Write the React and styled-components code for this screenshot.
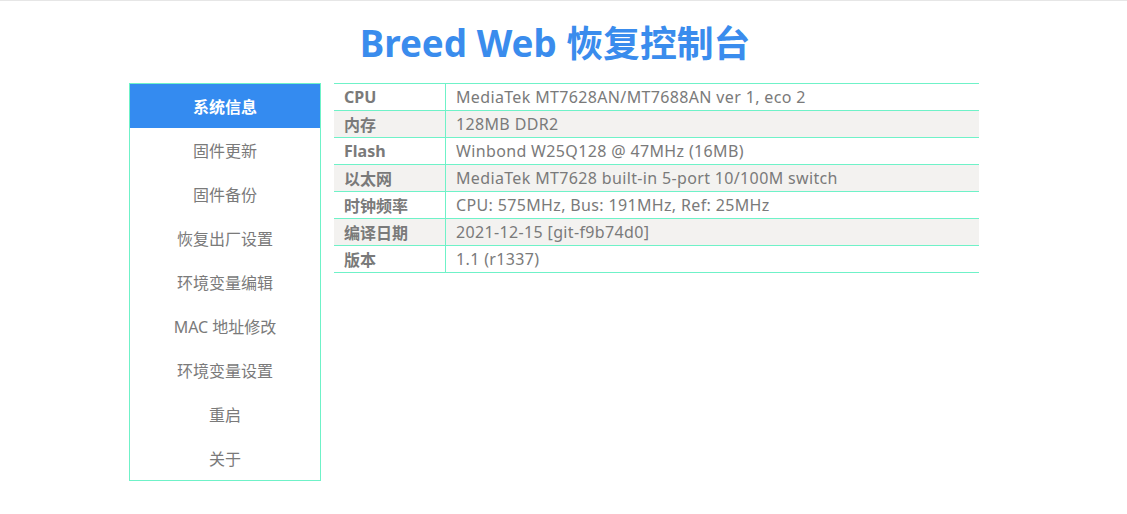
import React from "react";
import styled, { createGlobalStyle } from "styled-components";

const Global = createGlobalStyle`
  html, body { margin: 0; padding: 0; background: #fff; }
  body {
    font-family: "Noto Sans", "Noto Sans CJK SC", sans-serif;
    color: #7a7a7a;
    border-top: 1px solid #e6e6e6;
  }
`;

const Page = styled.div`
  width: 1108px;
  display: flex;
  flex-direction: column;
  align-items: center;
`;

const Title = styled.h1`
  margin: 18px 0 0 2px;
  height: 64px;
  font-family: "Noto Sans", "Noto Sans CJK SC", sans-serif;
  font-size: 36.8px;
  line-height: 48px;
  font-weight: 700;
  color: #3a8ced;
  letter-spacing: 0;
`;

const Body = styled.div`
  display: flex;
  align-items: flex-start;
  gap: 13px;
  width: 850px;
`;

const Sidebar = styled.nav`
  width: 190px;
  border: 1px solid #6ff2c8;
  display: flex;
  flex-direction: column;
`;

const NavItem = styled.div`
  height: 44px;
  display: flex;
  align-items: center;
  justify-content: center;
  font-size: 16px;
  color: ${(p) => (p.$active ? "#fff" : "#7a7a7a")};
  background: ${(p) => (p.$active ? "#348bf0" : "transparent")};
  font-weight: ${(p) => (p.$active ? 700 : 400)};
`;

const Table = styled.table`
  width: 645px;
  border-collapse: collapse;
  font-size: 16px;
`;

const Row = styled.tr`
  background: ${(p) => (p.$alt ? "#f3f2f0" : "#fff")};
`;

const Label = styled.td`
  width: 91px;
  height: 26px;
  padding: 0 10px;
  font-weight: 700;
  color: #7a7a7a;
  border-top: 1px solid #6ff2c8;
  border-bottom: 1px solid #6ff2c8;
  border-right: 1px solid #6ff2c8;
  white-space: nowrap;
`;

const Value = styled.td`
  padding: 0 10px;
  height: 26px;
  color: #7a7a7a;
  letter-spacing: 0.35px;
  border-top: 1px solid #6ff2c8;
  border-bottom: 1px solid #6ff2c8;
  white-space: nowrap;
`;

const nav = [
  "系统信息",
  "固件更新",
  "固件备份",
  "恢复出厂设置",
  "环境变量编辑",
  "MAC 地址修改",
  "环境变量设置",
  "重启",
  "关于",
];

const rows = [
  ["CPU", "MediaTek MT7628AN/MT7688AN ver 1, eco 2"],
  ["内存", "128MB DDR2"],
  ["Flash", "Winbond W25Q128 @ 47MHz (16MB)"],
  ["以太网", "MediaTek MT7628 built-in 5-port 10/100M switch"],
  ["时钟频率", "CPU: 575MHz, Bus: 191MHz, Ref: 25MHz"],
  ["编译日期", "2021-12-15 [git-f9b74d0]"],
  ["版本", "1.1 (r1337)"],
];

export default function App() {
  return (
    <>
      <Global />
      <Page>
        <Title>Breed Web 恢复控制台</Title>
        <Body>
          <Sidebar>
            {nav.map((n, i) => (
              <NavItem key={n} $active={i === 0}>
                {n}
              </NavItem>
            ))}
          </Sidebar>
          <Table>
            <tbody>
              {rows.map(([k, v], i) => (
                <Row key={k} $alt={i % 2 === 1}>
                  <Label>{k}</Label>
                  <Value>{v}</Value>
                </Row>
              ))}
            </tbody>
          </Table>
        </Body>
      </Page>
    </>
  );
}
